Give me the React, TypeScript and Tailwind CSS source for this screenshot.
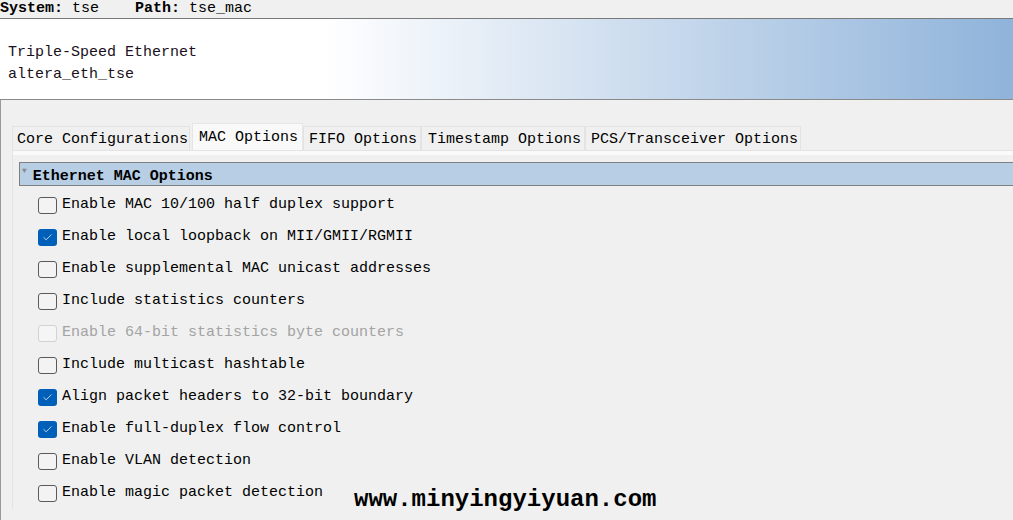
import { Check } from "lucide-react";

type Option = {
    label: string;
    checked?: boolean;
    disabled?: boolean;
};

const options: Option[] = [
    { label: "Enable MAC 10/100 half duplex support" },
    { label: "Enable local loopback on MII/GMII/RGMII", checked: true },
    { label: "Enable supplemental MAC unicast addresses" },
    { label: "Include statistics counters" },
    { label: "Enable 64-bit statistics byte counters", disabled: true },
    { label: "Include multicast hashtable" },
    { label: "Align packet headers to 32-bit boundary", checked: true },
    { label: "Enable full-duplex flow control", checked: true },
    { label: "Enable VLAN detection" },
    { label: "Enable magic packet detection" },
];

const tabs = [
    { label: "Core Configurations", cls: "w-[178px] pl-[4px] mr-[2px]" },
    { label: "MAC Options", cls: "w-[111px] pl-[6px]", active: true },
    { label: "FIFO Options", cls: "w-[118px] pl-[5px]" },
    { label: "Timestamp Options", cls: "w-[164px] pl-[6px]" },
    { label: "PCS/Transceiver Options", cls: "w-[216px] pl-[5px]" },
];

function CheckBox({ checked, disabled }: { checked?: boolean; disabled?: boolean }) {
    if (checked) {
        return (
            <span className="flex h-[17px] w-[19px] shrink-0 items-center justify-center rounded-[3px] bg-[#005fb8]">
                <Check size={11} strokeWidth={1.6} className="text-white" />
            </span>
        );
    }
    return (
        <span
            className={
                disabled
                    ? "h-[17px] w-[19px] shrink-0 rounded-[3px] border border-[#d2d2d2] bg-[#f5f5f5]"
                    : "h-[17px] w-[19px] shrink-0 rounded-[3px] border border-[#5a5a5a] bg-[#f3f3f3]"
            }
        />
    );
}

export default function App() {
    return (
        <div className="relative h-[520px] w-[1013px] overflow-hidden bg-[#f0f0f0] font-['Liberation_Mono',monospace] text-[15px] leading-[18px] text-black">
            {/* top path bar */}
            <div className="h-[19px] whitespace-pre border-b border-[#7a7a7a] leading-[17px]">
                <span className="font-bold">System:</span> tse    <span className="font-bold">Path:</span> tse_mac
            </div>

            {/* component header */}
            <div className="h-[81px] border-b border-[#8a8a8a] bg-[linear-gradient(to_right,#ffffff_32%,#8fb3da)] px-[8px] pt-[23px] leading-[22px] text-[#1a1020]">
                <div>Triple-Speed Ethernet</div>
                <div>altera_eth_tse</div>
            </div>

            {/* body */}
            <div className="h-full border-l border-[#9a9a9a] pl-[11px] pt-[23px]">
                <div className="flex items-end">
                    {tabs.map((t) =>
                        t.active ? (
                            <div
                                key={t.label}
                                className={`${t.cls} flex h-[27px] items-center border border-b-0 border-[#e6e6e6] bg-[#f9f9f9] pt-[1px]`}
                            >
                                {t.label}
                            </div>
                        ) : (
                            <div
                                key={t.label}
                                className={`${t.cls} flex h-[24px] items-center border border-b-0 border-[#e3e3e3] bg-[#f0f0f0] pt-[3px]`}
                            >
                                {t.label}
                            </div>
                        )
                    )}
                </div>

                <div className="border-l border-t border-[#e3e3e3] bg-[#f0f0f0]">
                    <div className="h-[4px] bg-[#fafafa]" />
                    <div className="pl-[6px] pt-[7px]">
                        <div className="flex h-[24px] items-center border border-r-0 border-[#7f7f7f] bg-[#b8cee4] pt-[5px] font-bold">
                            <span className="ml-[2px] mr-[6px] -translate-y-[6px] text-[8px] leading-none text-[#8a8a8a]">▼</span>
                            Ethernet MAC Options
                        </div>

                        <div className="mt-[3px] pl-[19px]">
                            {options.map((o) => (
                                <div key={o.label} className="flex h-[32px] items-center gap-[5px]">
                                    <CheckBox checked={o.checked} disabled={o.disabled} />
                                    <span className={o.disabled ? "text-[#a3a3a3]" : ""}>{o.label}</span>
                                </div>
                            ))}
                        </div>
                    </div>
                </div>
            </div>

            {/* watermark */}
            <div className="absolute left-[354px] top-[486px] text-[24px] font-bold leading-[28px] text-black">
                www.minyingyiyuan.com
            </div>
        </div>
    );
}
